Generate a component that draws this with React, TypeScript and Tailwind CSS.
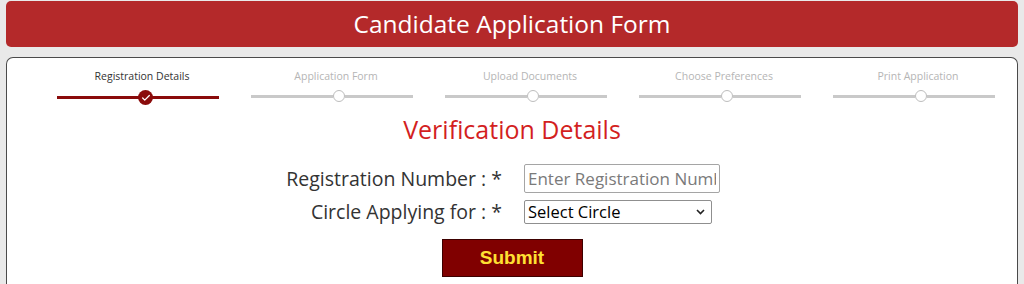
import { Check } from 'lucide-react';

const steps = [
  'Registration Details',
  'Application Form',
  'Upload Documents',
  'Choose Preferences',
  'Print Application',
];

function Step({ label, done }: { label: string; done: boolean }) {
  return (
    <div className="flex w-[162px] flex-col">
      <p
        className={`pl-[8px] text-center text-[10.5px] leading-[14px] ${
          done ? 'text-[#333]' : 'text-[#b5b5b5]'
        }`}
      >
        {label}
      </p>
      <div className="mt-[7px] flex items-center">
        <div
          className={`h-[3px] w-[82px] ${done ? 'bg-[#8a0b0b]' : 'bg-[#c9c9c9]'}`}
        />
        {done ? (
          <div className="flex h-[15px] w-[15px] -mx-[1px] items-center justify-center rounded-full bg-[#8a0b0b]">
            <Check className="text-white" size={10} strokeWidth={3} />
          </div>
        ) : (
          <div className="h-[12px] w-[12px] rounded-full border-[1.5px] border-[#bdbdbd] bg-white" />
        )}
        <div
          className={`h-[3px] flex-1 ${done ? 'bg-[#8a0b0b]' : 'bg-[#c9c9c9]'}`}
        />
      </div>
    </div>
  );
}

export default function App() {
  return (
    <div
      className="h-[284px] overflow-hidden bg-[#e9e9e9] px-[6px] pt-[1px]"
      style={{ fontFamily: '"Open Sans", "Noto Sans", sans-serif' }}
    >
      <div className="flex h-[46px] items-center justify-center rounded-[5px] bg-[#b4292a]">
        <h1 className="text-[24.5px] leading-none text-white">
          Candidate Application Form
        </h1>
      </div>

      <div className="mt-[10px] h-[240px] rounded-t-[7px] border-[1.5px] border-b-0 border-[#4a4a4a] bg-white">
        <div className="flex gap-[32px] pl-[50px] pt-[11px]">
          {steps.map((s, i) => (
            <Step key={s} label={s} done={i === 0} />
          ))}
        </div>

        <h2 className="mt-[8px] text-center text-[25px] leading-[32px] text-[#d31f1f]">
          Verification Details
        </h2>

        <div className="mt-[19px] flex items-center">
          <label className="w-[495px] text-right text-[19.5px] leading-[26px] text-[#333]">
            Registration Number : *
          </label>
          <input
            className="ml-[22px] h-[29px] w-[196px] rounded-[2px] border border-[#a5a5a5] px-[3px] text-[17px] text-[#333] placeholder:text-[#7a7a7a] outline-none"
            placeholder="Enter Registration Number"
          />
        </div>

        <div className="mt-[6px] flex items-center">
          <label className="w-[495px] text-right text-[19.5px] leading-[26px] text-[#333]">
            Circle Applying for : *
          </label>
          <div className="relative ml-[22px] flex h-[24px] w-[188px] items-center rounded-[2px] border border-[#8f8f8f] pl-[3px]">
            <span className="text-[16.5px] leading-none text-black">Select Circle</span>
            <svg
              className="absolute right-[6px] top-[8px]"
              width="9"
              height="6"
              viewBox="0 0 9 6"
              fill="none"
            >
              <path d="M1 1l3.5 3.5L8 1" stroke="#222" strokeWidth="1.6" />
            </svg>
          </div>
        </div>

        <div className="mt-[14px] flex justify-center">
          <button
            type="button"
            className="h-[38px] w-[141px] border border-[#3d0000] bg-[#800000] text-[19px] font-bold text-[#ffe033]"
            style={{ fontFamily: '"Liberation Sans", Arial, sans-serif' }}
          >
            Submit
          </button>
        </div>
      </div>
    </div>
  );
}
